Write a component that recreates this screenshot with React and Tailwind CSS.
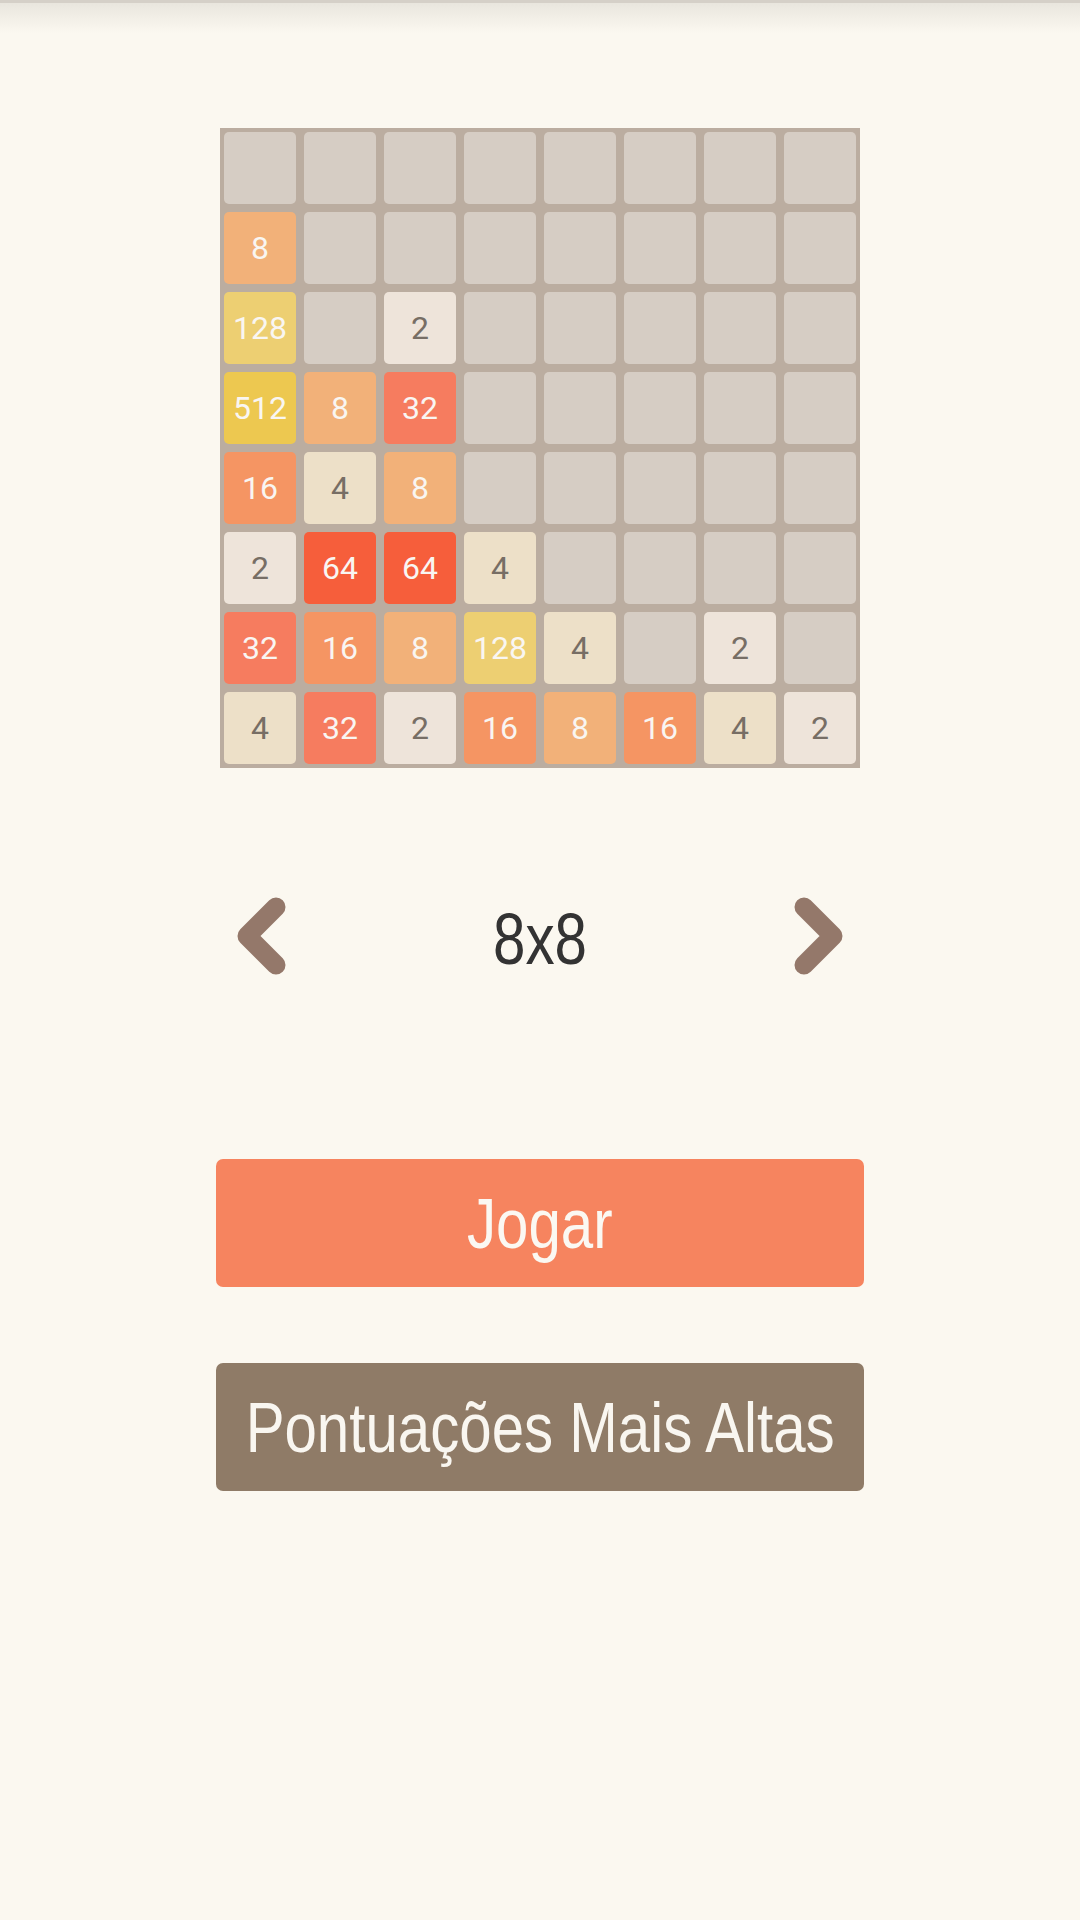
import React from 'react';

// tile colours, classic 2048 palette
const tileStyles = {
  0: 'bg-[#d6cdc4]',
  2: 'bg-[#eee4da] text-[#776e65]',
  4: 'bg-[#ede0c8] text-[#776e65]',
  8: 'bg-[#f2b179] text-[#f9f6f2]',
  16: 'bg-[#f59563] text-[#f9f6f2]',
  32: 'bg-[#f67c5f] text-[#f9f6f2]',
  64: 'bg-[#f65e3b] text-[#f9f6f2]',
  128: 'bg-[#edcf72] text-[#f9f6f2]',
  512: 'bg-[#edc850] text-[#f9f6f2]',
};

const board = [
  [0, 0, 0, 0, 0, 0, 0, 0],
  [8, 0, 0, 0, 0, 0, 0, 0],
  [128, 0, 2, 0, 0, 0, 0, 0],
  [512, 8, 32, 0, 0, 0, 0, 0],
  [16, 4, 8, 0, 0, 0, 0, 0],
  [2, 64, 64, 4, 0, 0, 0, 0],
  [32, 16, 8, 128, 4, 0, 2, 0],
  [4, 32, 2, 16, 8, 16, 4, 2],
];

// no narrow font installed, so squeeze Liberation Sans horizontally
const Narrow = ({ children, className = '' }) => (
  <span
    className={`inline-block whitespace-nowrap origin-center ${className}`}
    style={{ fontFamily: '"Liberation Sans", Arial, sans-serif' }}
  >
    {children}
  </span>
);

const Chevron = ({ flip }) => (
  <svg
    width="54"
    height="82"
    viewBox="0 0 54 82"
    className={flip ? 'scale-x-[-1]' : ''}
  >
    <polyline
      points="42,12 13,41 42,70"
      fill="none"
      stroke="#94786a"
      strokeWidth="19"
      strokeLinecap="round"
      strokeLinejoin="round"
    />
  </svg>
);

const App = () => {
  return (
    <div className="min-h-[1920px] w-full bg-[#fbf8f0] flex flex-col items-center relative">
      {/* status bar shadow */}
      <div className="absolute top-0 left-0 right-0 h-[3px] bg-[#d5d0c8]" />
      <div className="absolute top-[3px] left-0 right-0 h-[30px] bg-gradient-to-b from-[#e9e6de] to-[#fbf8f0]" />

      <div
        className="mt-[128px] w-[640px] p-[4px] bg-[#bbada0] grid grid-cols-8 gap-[8px]"
        style={{ fontFamily: 'Roboto, "Noto Sans", sans-serif' }}
      >
        {board.flat().map((v, i) => (
          <div
            key={i}
            className={`h-[72px] rounded-[5px] flex items-center justify-center text-[32px] ${tileStyles[v]}`}
          >
            {v ? v : ''}
          </div>
        ))}
      </div>

      <div className="mt-[127px] w-[648px] px-[18px] flex items-center justify-between">
        <Chevron />
        <Narrow className="text-[72px] leading-none text-[#333333] scale-x-[0.81] translate-y-[3px]">8x8</Narrow>
        <Chevron flip />
      </div>

      <button className="mt-[182px] w-[648px] h-[128px] rounded-[7px] bg-[#f6845f] text-[#fbf8f2] text-[71px] leading-none flex items-center justify-center">
        <Narrow className="scale-x-[0.82]">Jogar</Narrow>
      </button>

      <button className="mt-[76px] w-[648px] h-[128px] rounded-[7px] bg-[#8f7b67] text-[#f9f6f0] text-[71px] leading-none flex items-center justify-center">
        <Narrow className="scale-x-[0.82]">Pontuações Mais Altas</Narrow>
      </button>
    </div>
  );
};

export default App;
